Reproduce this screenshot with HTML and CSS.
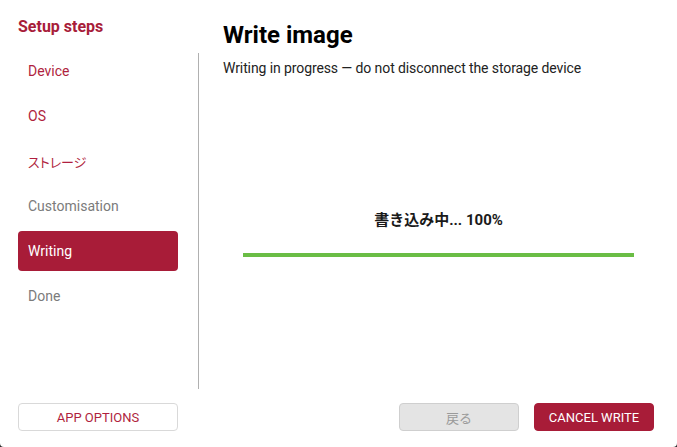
FILE: index.html
```html
<!DOCTYPE html>
<html lang="en">
<head>
<meta charset="utf-8">
<title>Write image</title>
<link rel="stylesheet" href="styles.css">
</head>
<body>
<div class="app">
  <div class="main">
    <aside class="sidebar">
      <div class="sidebar-title">Setup steps</div>
      <nav class="nav">
        <div class="nav-item done">Device</div>
        <div class="nav-item done">OS</div>
        <div class="nav-item done"><span class="ja-narrow">ストレージ</span></div>
        <div class="nav-item pending">Customisation</div>
        <div class="nav-item active">Writing</div>
        <div class="nav-item pending">Done</div>
      </nav>
    </aside>
    <div class="divider"></div>
    <section class="content">
      <h1 class="title">Write image</h1>
      <p class="subtitle">Writing in progress — do not disconnect the storage device</p>
      <div class="progress-label">書き込み中... 100%</div>
      <div class="progress-track"><div class="progress-fill" style="width:100%"></div></div>
    </section>
  </div>
  <footer class="footer">
    <button class="btn btn-outline">APP OPTIONS</button>
    <div class="footer-right">
      <button class="btn btn-disabled">戻る</button>
      <button class="btn btn-primary">CANCEL WRITE</button>
    </div>
  </footer>
</div>
</body>
</html>
```

FILE: styles.css
```css
html, body {
  margin: 0;
  padding: 0;
  background: #2a2a2a;
}
body {
  font-family: Roboto, "Noto Sans CJK JP", sans-serif;
  color: #1f1f1f;
}
.app {
  width: 677px;
  height: 447px;
  background: #ffffff;
  display: flex;
  flex-direction: column;
  border-radius: 0 0 4px 4px;
  overflow: hidden;
}
.main {
  flex: 1;
  display: flex;
  min-height: 0;
}
.sidebar {
  width: 160px;
  padding-left: 18px;
  display: flex;
  flex-direction: column;
}
.sidebar-title {
  margin-top: 17px;
  height: 19px;
  line-height: 19px;
  font-size: 16px;
  font-weight: 700;
  color: #a81d3a;
}
.nav {
  margin-top: 15px;
  display: flex;
  flex-direction: column;
  gap: 5px;
}
.nav-item {
  height: 40px;
  padding: 0 10px;
  display: flex;
  align-items: center;
  border-radius: 4px;
  font-size: 14px;
}
.ja-narrow {
  font-size: 13px;
  font-feature-settings: "palt";
}
.nav-item.done { color: #b01f40; }
.nav-item.pending { color: #7b7b7b; }
.nav-item.active {
  background: #a81c38;
  color: #ffffff;
}
.divider {
  width: 1px;
  margin-left: 20px;
  margin-top: 53px;
  background: #b0b0b0;
}
.content {
  flex: 1;
  padding: 0 23px 0 24px;
  display: flex;
  flex-direction: column;
}
.title {
  margin: 21px 0 0;
  font-size: 24px;
  font-weight: 700;
  color: #000;
  line-height: 28px;
}
.subtitle {
  margin: 11px 0 0;
  font-size: 14px;
  line-height: 16px;
  letter-spacing: -0.1px;
  color: #222;
}
.progress-label {
  margin-top: 134px;
  text-align: center;
  font-size: 15px;
  font-weight: 700;
  line-height: 20px;
  color: #1a1a1a;
}
.progress-track {
  margin: 23px 20px 0;
  height: 4px;
  background: #e0e0e0;
}
.progress-fill {
  height: 100%;
  background: #6abd45;
}
.footer {
  height: 58px;
  padding: 14px 23px 0 18px;
  box-sizing: border-box;
  display: flex;
  justify-content: space-between;
  align-items: flex-start;
}
.footer-right {
  display: flex;
  gap: 15px;
}
.btn {
  height: 28px;
  border-radius: 4px;
  font-family: Roboto, "Noto Sans CJK JP", sans-serif;
  font-size: 13px;
  padding: 0;
  box-sizing: border-box;
  cursor: pointer;
}
.btn-outline {
  width: 160px;
  background: #fff;
  border: 1px solid #d9d9d9;
  color: #b01f40;
}
.btn-disabled {
  width: 120px;
  background: #e4e4e4;
  border: 1px solid #cfcfcf;
  color: #9a9a9a;
}
.btn-primary {
  width: 120px;
  background: #a81c38;
  border: 1px solid #a81c38;
  color: #fff;
}
```
